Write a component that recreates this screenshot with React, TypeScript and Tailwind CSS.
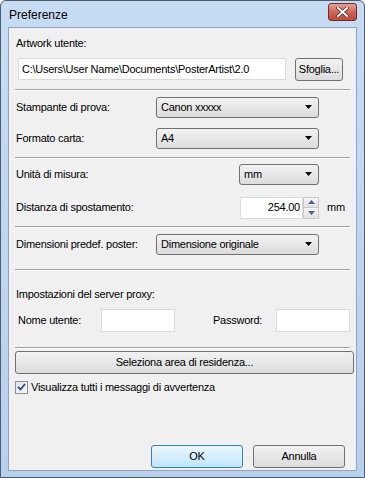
import React from "react";

const font = "font-['Liberation_Sans',Arial,sans-serif] text-[11px] tracking-[-0.25px] text-black";

const Arrow = () => (
  <svg width="7" height="4" viewBox="0 0 7 4" className="shrink-0">
    <path d="M0 0H7L3.5 4Z" fill="#000" />
  </svg>
);

const Select = ({ value, w }: { value: string; w: string }) => (
  <div
    className={`${w} h-[21px] flex items-center justify-between pl-[4px] pr-[6px] rounded-[3px] border border-[#707070] bg-gradient-to-b from-[#f2f2f2] to-[#dcdcdc]`}
  >
    <span>{value}</span>
    <Arrow />
  </div>
);

const Button = ({ label, w, focus }: { label: string; w: string; focus?: boolean }) => (
  <div
    className={`${w} h-[23px] flex items-center justify-center rounded-[3px] border ${
      focus ? "border-[#3c7fb1] from-[#eaf6fd] to-[#bee6fd]" : "border-[#707070] from-[#f2f2f2] to-[#dcdcdc]"
    } bg-gradient-to-b`}
  >
    {label}
  </div>
);

const Sep = () => <div className="h-[2px] border-t border-[#a0a0a0] border-b-white border-b" />;

export default function App() {
  return (
    <div className={`w-[365px] h-[478px] bg-white ${font}`}>
      <div className="w-full h-full border border-[#4c5d70] rounded-t-[6px] bg-gradient-to-b from-[#c6dcf3] to-[#b8d0ec] flex flex-col px-[7px] pb-[6px]">
        {/* Title bar */}
        <div className="h-[26px] flex items-center justify-between">
          <span className="text-[12px] tracking-normal pl-[1px] pt-[2px]">Preferenze</span>
          <div className="w-[29px] h-[18px] -mt-[4px] rounded-[3px] border border-[#6d2f2a] bg-gradient-to-b from-[#e4a298] via-[#cf6654] to-[#c04a36] flex items-center justify-center">
            <svg width="13" height="10" viewBox="0 0 13 10">
              <path d="M2 1L11 9M11 1L2 9" stroke="#4a2620" strokeWidth="3.4" strokeLinecap="square" />
              <path d="M2 1L11 9M11 1L2 9" stroke="#fff" strokeWidth="2" strokeLinecap="square" />
            </svg>
          </div>
        </div>

        {/* Client area */}
        <div className="flex-1 bg-[#f0f0f0] border border-[#8ea4bf] flex flex-col px-[6px] pt-[7px] pb-[1px]">
          <div className="pl-[1px]">Artwork utente:</div>
          <div className="flex items-center mt-[6px] pl-[3px] pr-[7px]">
            <div className="w-[268px] h-[22px] bg-white border border-[#dadada] flex items-center px-[3px]">
              C:\Users\User Name\Documents\PosterArtist\2.0
            </div>
            <div className="ml-[9px]">
              <Button label="Sfoglia..." w="w-[48px] h-[19px]" />
            </div>
          </div>
          <div className="mt-[8px]">
            <Sep />
          </div>

          <div className="flex items-center mt-[6px]">
            <span className="w-[141px] pl-[1px]">Stampante di prova:</span>
            <Select value="Canon xxxxx" w="w-[163px]" />
          </div>
          <div className="flex items-center mt-[10px]">
            <span className="w-[141px] pl-[1px]">Formato carta:</span>
            <Select value="A4" w="w-[163px]" />
          </div>
          <div className="mt-[8px]">
            <Sep />
          </div>

          <div className="flex items-center mt-[5px]">
            <span className="w-[224px] pl-[1px]">Unità di misura:</span>
            <Select value="mm" w="w-[80px]" />
          </div>
          <div className="flex items-center mt-[12px]">
            <span className="w-[225px] pl-[1px]">Distanza di spostamento:</span>
            <div className="w-[63px] h-[22px] bg-white border border-[#dadada] flex items-center justify-end pr-[2px]">
              254.00
            </div>
            <div className="w-[16px] h-[22px] flex flex-col border border-[#c8c8c8]">
              <div className="flex-1 flex items-center justify-center bg-gradient-to-b from-[#f4f4f4] to-[#e2e2e2] border-b border-[#c8c8c8]">
                <svg width="7" height="4" viewBox="0 0 7 4">
                  <path d="M0 4H7L3.5 0Z" fill="#4d6185" />
                </svg>
              </div>
              <div className="flex-1 flex items-center justify-center bg-gradient-to-b from-[#f4f4f4] to-[#e2e2e2]">
                <svg width="7" height="4" viewBox="0 0 7 4">
                  <path d="M0 0H7L3.5 4Z" fill="#4d6185" />
                </svg>
              </div>
            </div>
            <span className="ml-[8px]">mm</span>
          </div>
          <div className="mt-[7px]">
            <Sep />
          </div>

          <div className="flex items-center mt-[6px]">
            <span className="w-[141px] pl-[1px]">Dimensioni predef. poster:</span>
            <Select value="Dimensione originale" w="w-[163px]" />
          </div>
          <div className="mt-[14px]">
            <Sep />
          </div>

          <div className="mt-[15px] pl-[1px]">Impostazioni del server proxy:</div>
          <div className="flex items-center mt-[7px] pl-[3px]">
            <span className="w-[83px]">Nome utente:</span>
            <div className="w-[74px] h-[23px] bg-white border border-[#dadada]" />
            <span className="ml-[38px] w-[63px]">Password:</span>
            <div className="w-[74px] h-[23px] bg-white border border-[#dadada]" />
          </div>
          <div className="mt-[15px]">
            <Sep />
          </div>
          <div className="mt-[2px]">
            <Button label="Seleziona area di residenza..." w="w-[339px] h-[22px]" />
          </div>
          <div className="flex items-center mt-[5px]">
            <div className="w-[13px] h-[13px] border border-[#8e8f8f] bg-gradient-to-br from-[#e0e4ea] to-[#f6f7f8] flex items-center justify-center">
              <svg width="9" height="8" viewBox="0 0 9 8">
                <path d="M1 4L3.5 6.5L8 1" stroke="#36458c" strokeWidth="1.8" fill="none" />
              </svg>
            </div>
            <span className="ml-[3px]">Visualizza tutti i messaggi di avvertenza</span>
          </div>

          <div className="flex-1" />
          <div className="flex justify-end gap-[10px] pr-[5px] pb-[1px]">
            <Button label="OK" w="w-[92px]" focus />
            <Button label="Annulla" w="w-[92px]" />
          </div>
        </div>
      </div>
    </div>
  );
}
